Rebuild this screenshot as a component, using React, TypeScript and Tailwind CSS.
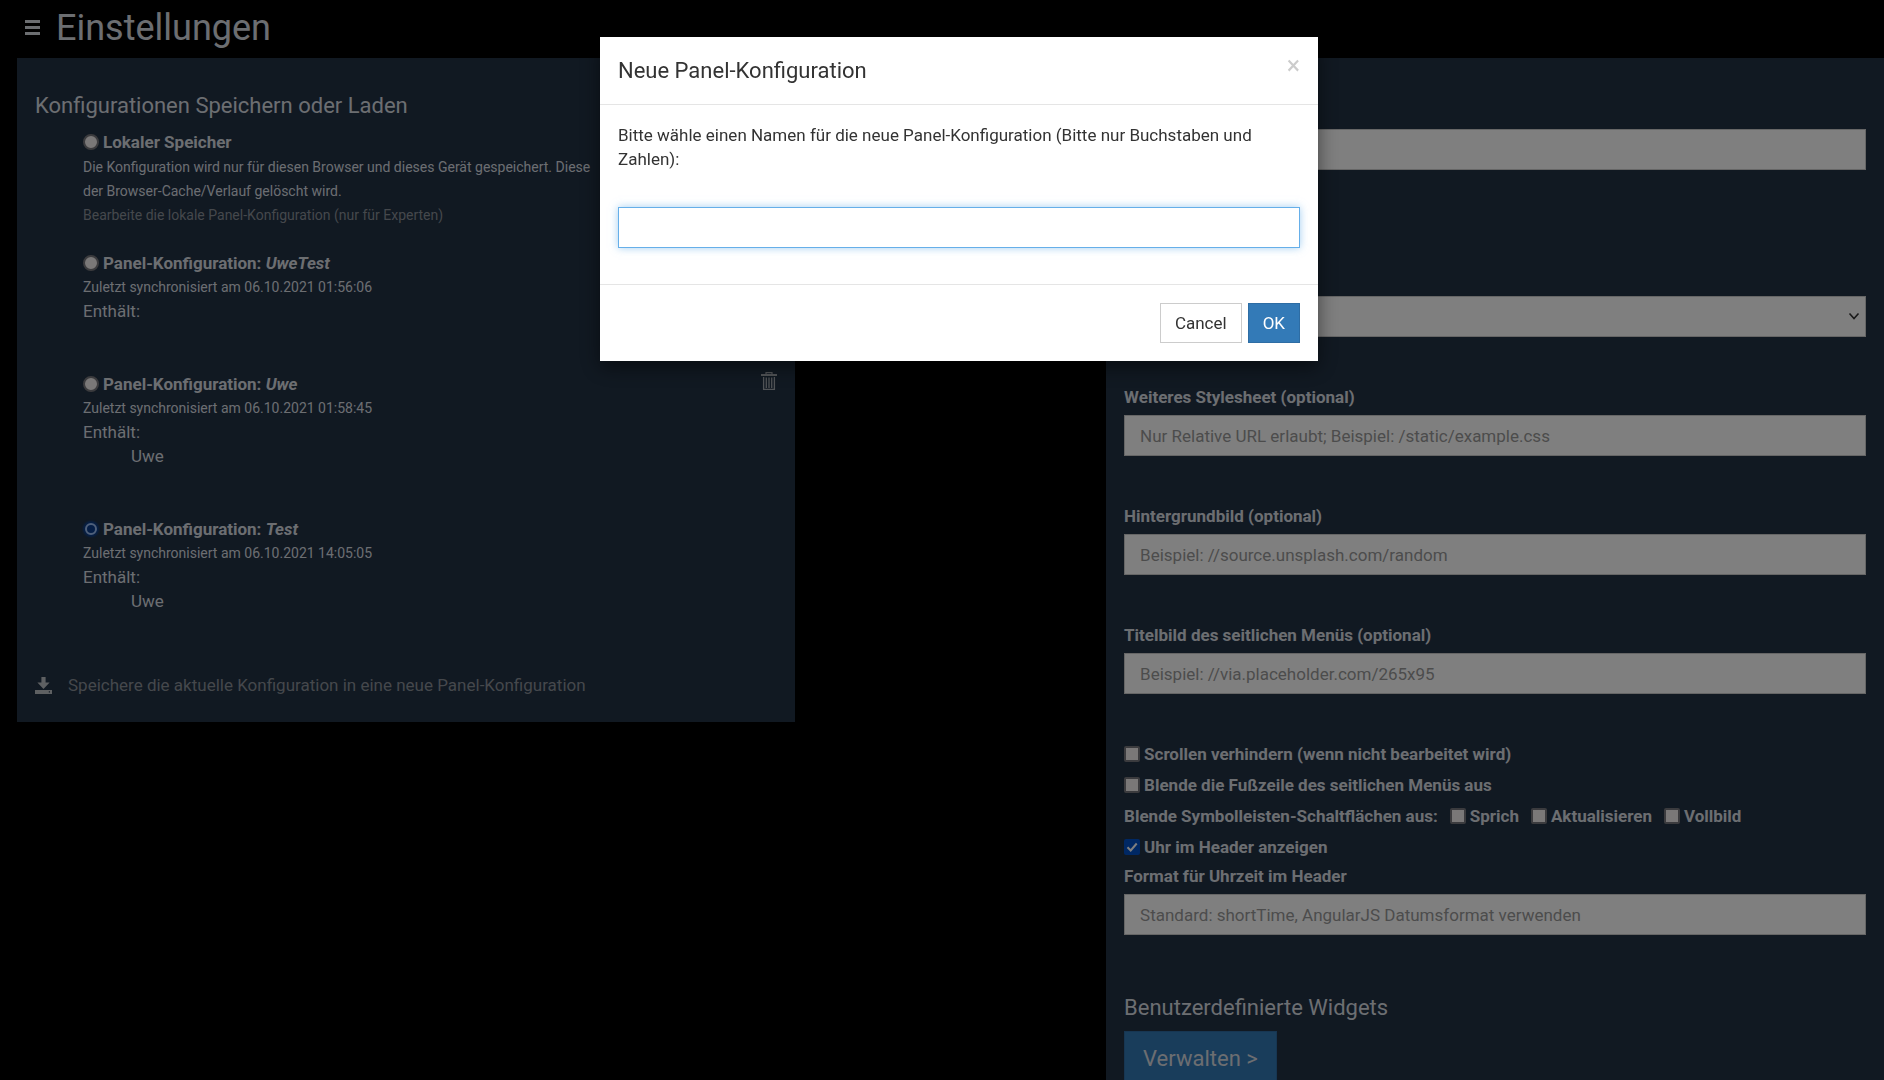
import React, { useState } from "react";
import { clsx } from "clsx";

type PanelConfig = {
  name: string;
  synced: string;
  dashboards: string[];
};

const configs: PanelConfig[] = [
  { name: "UweTest", synced: "06.10.2021 01:56:06", dashboards: [] },
  { name: "Uwe", synced: "06.10.2021 01:58:45", dashboards: ["Uwe"] },
  { name: "Test", synced: "06.10.2021 14:05:05", dashboards: ["Uwe"] },
];

const inputClass =
  "block w-full h-[41px] px-[15px] bg-white border border-[#cccccc] text-[#555555] placeholder:text-[#999999] placeholder:opacity-100 outline-none";

const MenuIcon = () => (
  <svg viewBox="0 0 15 15" className="w-[15px] h-[15px]" fill="currentColor">
    <path d="M0 0h15v3H0zM0 6h15v3H0zM0 12h15v3H0z" />
  </svg>
);

const TrashIcon = () => (
  <svg viewBox="0 0 16 18" className="w-4 h-[18px]" fill="none" stroke="currentColor">
    <path d="M0 3h16" strokeWidth="2" />
    <path d="M5 2V.6h6V2" strokeWidth="1.2" />
    <path d="M2.6 5v12.3h10.8V5" strokeWidth="1.3" />
    <path d="M5.3 5.5V16M8 5.5V16M10.7 5.5V16" strokeWidth="1.3" />
  </svg>
);

const SaveIcon = () => (
  <svg viewBox="0 0 17 17" className="w-[17px] h-[17px]" fill="currentColor">
    <path d="M6.4 0h4.2v5.6h4L8.5 12 2.4 5.6h4z" />
    <path fillRule="evenodd" d="M0 13h17v4H0zM13.8 14.3v1.2H15v-1.2z" />
  </svg>
);

type RadioProps = {
  id: string;
  checked: boolean;
  onChange: () => void;
  children: React.ReactNode;
};

const ConfigRadio = ({ id, checked, onChange, children }: RadioProps) => (
  <div className="flex items-center h-[26px]">
    <input
      type="radio"
      name="config"
      id={id}
      checked={checked}
      onChange={onChange}
      className={clsx(
        "appearance-none shrink-0 rounded-full border-2",
        checked
          ? "w-3 h-3 mx-[2px] bg-[#0a3c8c] border-[#9fc0f5] shadow-[0_0_2px_2px_#0d3f8c]"
          : "w-4 h-4 bg-[#f4f0f0] border-[#77777c]"
      )}
    />
    <label htmlFor={id} className="ml-1 font-bold">
      {children}
    </label>
  </div>
);

type CheckProps = {
  id: string;
  label: string;
  defaultChecked?: boolean;
};

const Check = ({ id, label, defaultChecked }: CheckProps) => (
  <span className="flex items-center">
    <span className="relative flex w-4 h-4">
      <input
        type="checkbox"
        id={id}
        defaultChecked={defaultChecked}
        className="peer appearance-none w-4 h-4 rounded-xs border-2 border-[#77777c] bg-[#f4f0f0] checked:bg-[#0050c8] checked:border-[#0050c8]"
      />
      <svg
        viewBox="0 0 16 16"
        className="absolute inset-0 hidden peer-checked:block pointer-events-none"
        fill="none"
        stroke="white"
        strokeWidth="2"
      >
        <path d="M3.5 8.2l3.2 3.3 6-7" />
      </svg>
    </span>
    <label htmlFor={id} className="ml-1 font-bold">
      {label}
    </label>
  </span>
);

type FieldProps = {
  id: string;
  label: string;
  placeholder?: string;
};

const Field = ({ id, label, placeholder }: FieldProps) => (
  <div>
    <label htmlFor={id} className="block mb-[6px] font-bold">
      {label}
    </label>
    <input id={id} type="text" placeholder={placeholder} className={inputClass} />
  </div>
);

const StorageSettings = () => {
  const [selected, setSelected] = useState("Test");

  return (
    <section className="col-span-5 self-start bg-[#223244] px-[18px] pt-9 pb-[25px]">
      <h2 className="text-[22px] leading-6">Konfigurationen Speichern oder Laden</h2>
      <div className="pl-12 pt-[11px]">
        <div className="mb-[23px]">
          <ConfigRadio
            id="config-local"
            checked={selected === ""}
            onChange={() => setSelected("")}
          >
            Lokaler Speicher
          </ConfigRadio>
          <p className="text-sm leading-6">
            Die Konfiguration wird nur für diesen Browser und dieses Gerät gespeichert. Diese
            <br />
            der Browser-Cache/Verlauf gelöscht wird.
          </p>
          <a href="#edit" className="block text-sm leading-6 text-[#8a9099]">
            Bearbeite die lokale Panel-Konfiguration (nur für Experten)
          </a>
        </div>
        {configs.map((config) => (
          <div key={config.name} className="flex justify-between items-start mb-12">
            <div>
              <ConfigRadio
                id={`config-${config.name}`}
                checked={selected === config.name}
                onChange={() => setSelected(config.name)}
              >
                Panel-Konfiguration: <em>{config.name}</em>
              </ConfigRadio>
              <p className="text-sm leading-[23px]">
                Zuletzt synchronisiert am {config.synced}
              </p>
              <p>Enthält:</p>
              {config.dashboards.map((dashboard) => (
                <p key={dashboard} className="pl-12">
                  {dashboard}
                </p>
              ))}
            </div>
            {config.name !== "Test" && (
              <button type="button" aria-label="Löschen" className="pt-[1px] text-[#a3a8ae]">
                <TrashIcon />
              </button>
            )}
          </div>
        ))}
      </div>
      <button type="button" className="flex items-center mt-[60px] text-[#8a9099]">
        <span className="text-[#bcc0c4]">
          <SaveIcon />
        </span>
        <span className="ml-4">
          Speichere die aktuelle Konfiguration in eine neue Panel-Konfiguration
        </span>
      </button>
    </section>
  );
};

const PanelSettings = () => (
  <section className="col-span-5 col-start-8 bg-[#223244] px-[18px] pt-[41px]">
    <Field id="name" label="Name" />
    <div className="mt-24">
      <label htmlFor="theme" className="block mb-[6px] font-bold">
        Design
      </label>
      <div className="relative">
        <select id="theme" className={clsx(inputClass, "appearance-none")}>
          <option></option>
        </select>
        <svg
          viewBox="0 0 12 12"
          className="absolute right-[6px] top-[14px] w-3 h-3 pointer-events-none"
          fill="none"
          stroke="#333333"
          strokeWidth="1.6"
        >
          <path d="M1.5 3.5L6 8.5l4.500-5" />
        </svg>
      </div>
    </div>
    <div className="flex flex-col gap-12 mt-12">
      <Field
        id="stylesheet"
        label="Weiteres Stylesheet (optional)"
        placeholder="Nur Relative URL erlaubt; Beispiel: /static/example.css"
      />
      <Field
        id="background"
        label="Hintergrundbild (optional)"
        placeholder="Beispiel: //source.unsplash.com/random"
      />
      <Field
        id="drawer"
        label="Titelbild des seitlichen Menüs (optional)"
        placeholder="Beispiel: //via.placeholder.com/265x95"
      />
    </div>
    <div className="flex flex-col gap-[7px] mt-12">
      <Check id="scroll" label="Scrollen verhindern (wenn nicht bearbeitet wird)" />
      <Check id="footer" label="Blende die Fußzeile des seitlichen Menüs aus" />
      <div className="flex items-center gap-3">
        <span className="font-bold">Blende Symbolleisten-Schaltflächen aus:</span>
        <Check id="speak" label="Sprich" />
        <Check id="refresh" label="Aktualisieren" />
        <Check id="fullscreen" label="Vollbild" />
      </div>
      <Check id="clock" label="Uhr im Header anzeigen" defaultChecked />
    </div>
    <div className="mt-[5px]">
      <Field
        id="clock-format"
        label="Format für Uhrzeit im Header"
        placeholder="Standard: shortTime, AngularJS Datumsformat verwenden"
      />
    </div>
    <h2 className="mt-[61px] text-[22px] leading-6">Benutzerdefinierte Widgets</h2>
    <button
      type="button"
      className="mt-[11px] h-14 px-[18px] bg-[#337ab7] border border-[#2e6da4] text-[22px]"
    >
      Verwalten &gt;
    </button>
  </section>
);

const NewConfigDialog = () => (
  <div className="fixed inset-0 flex items-start justify-center bg-black/50 pl-[34px] pt-[37px]">
    <div
      role="dialog"
      aria-labelledby="dialog-title"
      className="w-[718px] bg-white text-[#333333] shadow-[0_6px_18px_rgba(0,0,0,0.5)]"
    >
      <div className="flex justify-between items-start px-[18px] pt-[19px] pb-[18px] border-b border-[#e5e5e5]">
        <h4 id="dialog-title" className="text-[22px] leading-[30px]">
          Neue Panel-Konfiguration
        </h4>
        <button type="button" aria-label="Schließen" className="text-[25px] leading-5 text-[#cccccc]">
          ×
        </button>
      </div>
      <div className="px-[18px] pt-[18px] pb-9">
        <label htmlFor="config-name">
          Bitte wähle einen Namen für die neue Panel-Konfiguration (Bitte nur Buchstaben und
          Zahlen):
        </label>
        <input
          id="config-name"
          type="text"
          className="block mt-9 w-full h-[41px] px-[15px] border border-[#66afe9] outline-none shadow-[0_0_8px_rgba(102,175,233,0.6)]"
        />
      </div>
      <div className="flex justify-end gap-[6px] p-[18px] border-t border-[#e5e5e5]">
        <button type="button" className="h-10 px-[14px] border border-[#cccccc]">
          Cancel
        </button>
        <button
          type="button"
          className="h-10 px-[14px] bg-[#337ab7] border border-[#2e6da4] text-white"
        >
          OK
        </button>
      </div>
    </div>
  </div>
);

const App = () => {
  return (
    <div className="h-screen overflow-hidden bg-black text-[#d8dce2] font-['Roboto',sans-serif] text-[17px] leading-6">
      <header className="flex items-center gap-4 h-[58px] pl-[25px] pb-[3px]">
        <button type="button" aria-label="Menü">
          <MenuIcon />
        </button>
        <h1 className="text-4xl">Einstellungen</h1>
      </header>
      <main className="grid grid-cols-12 h-full pl-[17px]">
        <StorageSettings />
        <PanelSettings />
      </main>
      <NewConfigDialog />
    </div>
  );
};

export default App;
